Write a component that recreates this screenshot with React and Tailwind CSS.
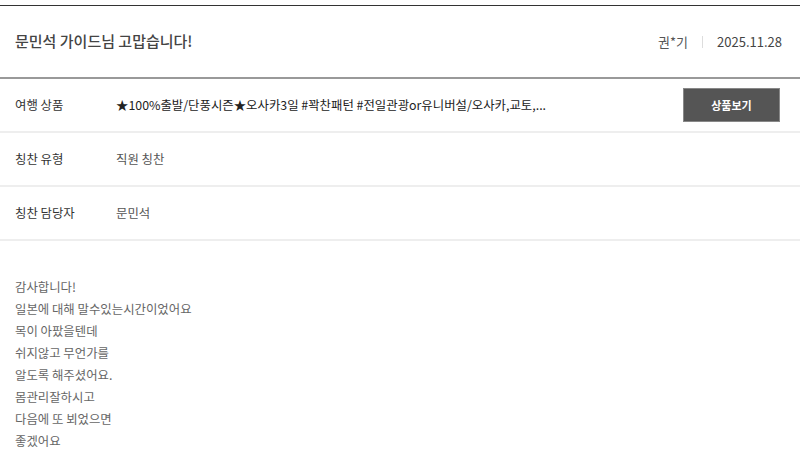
import React from 'react';

const FONT = { fontFamily: '"Noto Sans CJK KR", "Noto Sans", sans-serif' };

const product = '★100%출발/단풍시즌★오사카3일 #꽉찬패턴 #전일관광or유니버설/오사카,교토,...';

const body = [
  '감사합니다!',
  '일본에 대해 말수있는시간이었어요',
  '목이 아팠을텐데',
  '쉬지않고 무언가를',
  '알도록 해주셨어요.',
  '몸관리잘하시고',
  '다음에 또 뵈었으면',
  '좋겠어요',
];

const Row = ({ label, children }) => (
  <div className="flex items-center h-[54px] px-[15px] border-b-2 border-[#eeeeee]">
    <div className="w-[101px] shrink-0 text-[12.4px] text-[#333]">{label}</div>
    <div className="flex-1 min-w-0 flex items-center">{children}</div>
  </div>
);

export default function App() {
  return (
    <div className="w-[800px] h-[471px] overflow-hidden bg-white" style={FONT}>
      <div className="mt-[5px] border-t border-[#333]">
        <div className="h-[73px] flex items-center justify-between pl-[15px] pr-[18px] border-b-2 border-[#999]">
          <h2 className="text-[15px] font-medium text-[#444]">문민석 가이드님 고맙습니다!</h2>
          <div className="flex items-center text-[13px]">
            <span className="text-[#555]">권*기</span>
            <span className="mx-[14px] w-px h-[12px] bg-[#dddddd]" />
            <span className="text-[#444]">2025.11.28</span>
          </div>
        </div>

        <Row label="여행 상품">
          <p className="flex-1 min-w-0 pr-[120px] truncate text-[12.4px] text-[#222]">{product}</p>
          <button
            type="button"
            className="shrink-0 w-[97px] h-[34px] mr-[5px] bg-[#555] border border-[#888] text-white text-[11px] font-bold"
          >
            상품보기
          </button>
        </Row>
        <Row label="칭찬 유형">
          <span className="text-[12.4px] text-[#555]">직원 칭찬</span>
        </Row>
        <Row label="칭찬 담당자">
          <span className="text-[12.4px] text-[#555]">문민석</span>
        </Row>

        <div className="pt-[35px] px-[15px] text-[12.4px] leading-[22px] text-[#666]">
          {body.map((line, i) => (
            <p key={i}>{line}</p>
          ))}
        </div>
      </div>
    </div>
  );
}
